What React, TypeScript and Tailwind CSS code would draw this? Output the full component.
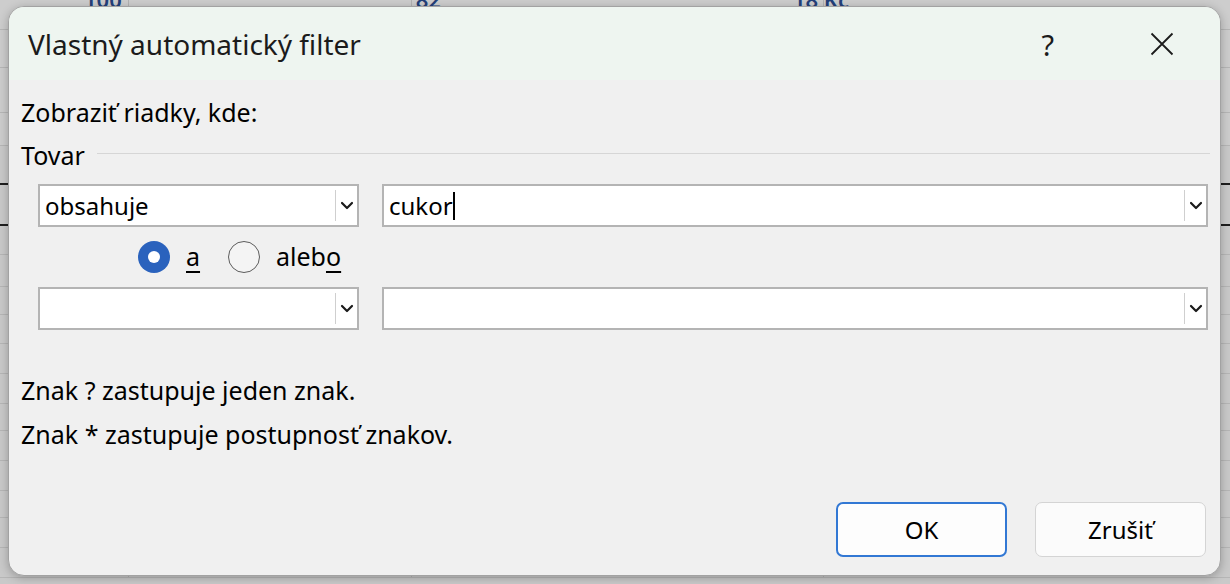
import React from "react";

const Chevron = () => (
  <svg width="14" height="9" viewBox="0 0 14 9" fill="none">
    <path d="M2 2 L7 7 L12 2" stroke="#1a1a1a" strokeWidth="2.2" strokeLinecap="round" strokeLinejoin="round" />
  </svg>
);

const Combo = ({ w, text, cursor }: { w: string; text?: string; cursor?: boolean }) => (
  <div className={`${w} h-[43px] bg-white border-2 border-[#b4b4b4] flex items-center`}>
    <div className="flex-1 flex items-center pl-[5px] text-[24px] text-black leading-none">
      {text}
      {cursor && <span className="inline-block w-[2px] h-[28px] bg-black" />}
    </div>
    <div className="w-[1px] self-stretch my-[4px] bg-[#cfcfcf]" />
    <div className="w-[21px] flex items-center justify-center">
      <Chevron />
    </div>
  </div>
);

const rowHeights = [30, 38, 45, 33, 39, 41, 29, 32, 28, 29, 30, 30, 27, 30, 30, 27, 30, 30];

export default function App() {
  return (
    <div
      className="relative w-[1230px] h-[584px] overflow-hidden bg-[#c9c9c9]"
      style={{ fontFamily: '"Segoe UI", "Noto Sans", "Open Sans", sans-serif' }}
    >
      {/* dimmed spreadsheet behind the dialog */}
      <div className="flex flex-col">
        {rowHeights.map((h, i) => (
          <div
            key={i}
            style={{ height: h }}
            className={`relative flex border-b ${i === 4 || i === 5 ? "border-[#1e1e1e] border-b-2" : "border-[#b6b6b6]"} ${i < 4 ? "bg-[#cdcdcd]" : "bg-[#c9c9c9]"}`}
          >
            <div className="w-[129px] border-r border-[#b2b2b2]" />
            <div className="w-[283px] border-r border-[#b2b2b2]" />
            <div className="w-[412px] border-r border-[#b2b2b2]" />
            <div className="flex-1" />
            {i === 0 && (
              <div className="absolute left-0 top-[-12px] w-full flex text-[22px] leading-[22px] text-[#23407a] font-semibold">
                <span className="ml-[84px]">100</span>
                <span className="ml-[294px]">82</span>
                <span className="ml-[352px]">18 Kč</span>
              </div>
            )}
          </div>
        ))}
      </div>

      {/* dialog */}
      <div className="absolute left-[8px] top-[6px] w-[1213px] h-[570px] rounded-[16px] bg-[#f0f0f0] border border-[#a2a2a2] shadow-[0_2px_10px_rgba(0,0,0,0.25)] flex flex-col overflow-hidden">
        <div className="h-[73px] shrink-0 bg-[#eef5f0] flex items-center pl-[19px] pr-[46px]">
          <div className="flex-1 text-[28px] text-[#1b1b1b] leading-none pt-[1px]">Vlastný automatický filter</div>
          <div className="text-[29px] text-[#1b1b1b] leading-none mr-[96px] pt-[1px]">?</div>
          <svg width="24" height="24" viewBox="0 0 24 24" fill="none">
            <path d="M1.5 1.5 L22.5 22.5 M22.5 1.5 L1.5 22.5" stroke="#1b1b1b" strokeWidth="1.8" />
          </svg>
        </div>

        <div className="flex-1 flex flex-col text-black">
          <div className="mt-[17px] pl-[12px] text-[25px] leading-[30px]">Zobraziť riadky, kde:</div>
          <div className="mt-[13px] pl-[12px] flex items-center gap-[12px]">
            <span className="text-[25px] leading-[30px]">Tovar</span>
            <div className="flex-1 h-[1px] bg-[#d6d6d6] mr-[10px] -mt-[4px]" />
          </div>

          <div className="mt-[14px] pl-[29px] flex gap-[23px]">
            <Combo w="w-[321px]" text="obsahuje" />
            <Combo w="w-[826px]" text="cukor" cursor />
          </div>

          <div className="h-[60px] pl-[129px] flex items-center text-[25px]">
            <div className="w-[32px] h-[32px] rounded-full bg-[#2a62bd] flex items-center justify-center">
              <div className="w-[12px] h-[12px] rounded-full bg-white" />
            </div>
            <span className="ml-[16px] underline underline-offset-[5px] decoration-[1.5px]">a</span>
            <div className="ml-[28px] w-[32px] h-[32px] rounded-full border-[1.5px] border-[#5c5c5c] bg-[#f4f4f4]" />
            <span className="ml-[16px]">
              aleb<span className="underline underline-offset-[5px] decoration-[1.5px]">o</span>
            </span>
          </div>

          <div className="pl-[29px] flex gap-[23px]">
            <Combo w="w-[321px]" />
            <Combo w="w-[826px]" />
          </div>

          <div className="mt-[45px] pl-[12px] text-[25px] leading-[30px]">Znak ? zastupuje jeden znak.</div>
          <div className="mt-[14px] pl-[12px] text-[25px] leading-[30px]">Znak * zastupuje postupnosť znakov.</div>

          <div className="mt-[53px] flex justify-end gap-[28px] pr-[14px]">
            <button className="w-[171px] h-[55px] rounded-[7px] border-2 border-[#3278d4] bg-[#fdfdfd] text-[24px] text-black">
              OK
            </button>
            <button className="w-[171px] h-[55px] rounded-[7px] border border-[#d4d4d4] bg-[#fbfbfb] text-[24px] text-black">
              Zrušiť
            </button>
          </div>
        </div>
      </div>
    </div>
  );
}
